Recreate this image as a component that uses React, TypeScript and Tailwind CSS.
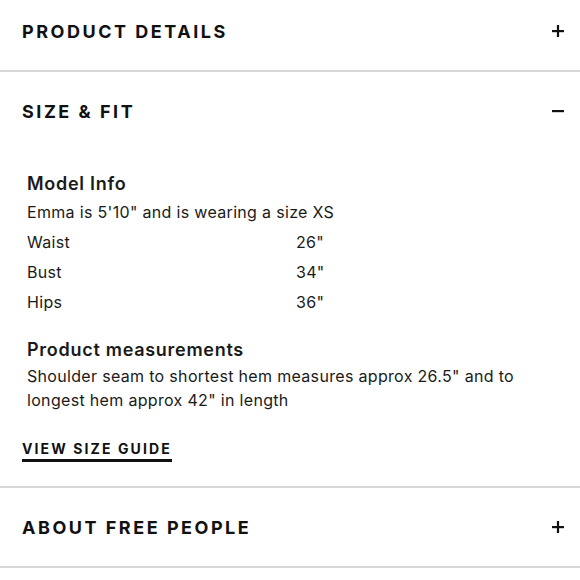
const rows = [
    { label: "Waist", value: "26\"" },
    { label: "Bust", value: "34\"" },
    { label: "Hips", value: "36\"" },
];

function Toggle({ open }: { open?: boolean }) {
    return (
        <svg width="12" height="12" viewBox="0 0 12 12" className="text-[#111]">
            <rect x="0" y="5" width="12" height="2.2" fill="currentColor" />
            {!open && <rect x="4.9" y="0" width="2.2" height="12" fill="currentColor" />}
        </svg>
    );
}

function SectionHeader({ title, open }: { title: string, open?: boolean }) {
    return (
        <div className="flex h-[78px] items-center justify-between pl-[22px] pr-[16px]">
            <h2 className="text-[18px] font-bold tracking-[0.14em] text-[#111]">{title}</h2>
            <Toggle open={open} />
        </div>
    );
}

export default function App() {
    return (
        <div className="h-[580px] w-[580px] overflow-hidden bg-white font-['Inter',sans-serif] text-[#1a1a1a]">
            <div className="-mt-2 border-b-2 border-[#d6d6d6]">
                <SectionHeader title="PRODUCT DETAILS" />
            </div>

            <div className="border-b-2 border-[#d6d6d6]">
                <SectionHeader title="SIZE & FIT" open />

                <div className="pb-[24px] pl-[27px] pr-[20px] pt-[20px]">
                    <h3 className="text-[18px] font-semibold leading-[28px] tracking-[0.04em]">Model Info</h3>
                    <p className="text-[16px] leading-[29px] tracking-[0.02em]">Emma is 5'10" and is wearing a size XS</p>
                    {rows.map((r) => (
                        <div key={r.label} className="grid grid-cols-[269px_1fr] text-[16px] leading-[30px] tracking-[0.02em]">
                            <span>{r.label}</span>
                            <span>{r.value}</span>
                        </div>
                    ))}

                    <h3 className="mt-[19px] text-[18px] font-semibold leading-[28px] tracking-[0.04em]">Product measurements</h3>
                    <p className="text-[16px] leading-[24px] tracking-[0.02em]">
                        Shoulder seam to shortest hem measures approx 26.5" and to longest hem approx 42" in length
                    </p>

                    <a className="-ml-[5px] mt-[28px] inline-block border-b-[3px] border-[#111] pb-[1px] text-[14px] font-bold leading-[18px] tracking-[0.15em] text-[#111]">
                        VIEW SIZE GUIDE
                    </a>
                </div>
            </div>

            <div className="border-b-2 border-[#d6d6d6]">
                <SectionHeader title="ABOUT FREE PEOPLE" />
            </div>
        </div>
    );
}
